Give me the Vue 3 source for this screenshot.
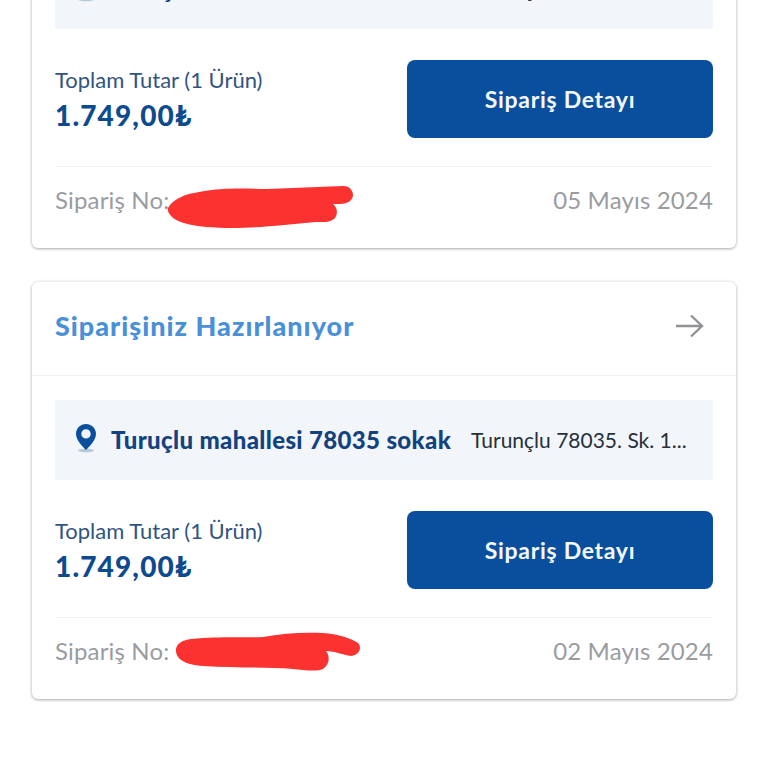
<template>
  <div class="page">
    <div class="order-list">
      <div v-for="order in orders" :key="order.date" class="order-card">
        <div class="card-head">
          <span class="status">Siparişiniz Hazırlanıyor</span>
          <svg class="arrow" width="32" height="32" viewBox="0 0 32 32" fill="none">
            <path d="M3 16H29M18 5.500 29 16 18 26.500" stroke="#8f9194" stroke-width="2.4" />
          </svg>
        </div>
        <div class="card-body">
          <div class="address">
            <svg class="pin" width="22" height="30" viewBox="0 0 22 30">
              <ellipse cx="11" cy="27.5" rx="8" ry="1.8" fill="#b9c8da" />
              <path fill="#0a4f9e" fill-rule="evenodd" d="M11 1C5.500 1 1 5.400 1 10.800 1 17.500 8 24 11 27 14 24 21 17.500 21 10.800 21 5.400 16.500 1 11 1ZM11 6.200A4.700 4.700 0 1 1 11 15.600 4.700 4.700 0 0 1 11 6.200Z" />
            </svg>
            <span class="address-name">{{ order.addressName }}</span>
            <span class="address-line">{{ order.addressLine }}</span>
          </div>
          <div class="summary">
            <div class="total">
              <span class="total-label">Toplam Tutar (1 Ürün)</span>
              <span class="total-price">1.749,00₺</span>
            </div>
            <button class="detail-btn">Sipariş Detayı</button>
          </div>
          <div class="card-foot">
            <span class="order-no">Sipariş No:</span>
            <span class="date">{{ order.date }}</span>
            <!-- red scribble over the order number -->
            <svg class="scribble" :class="order.scribble.cls" :width="order.scribble.w" :height="order.scribble.h" :viewBox="`0 0 ${order.scribble.w} ${order.scribble.h}`">
              <path fill="#fb3230" :d="order.scribble.d" />
            </svg>
          </div>
        </div>
      </div>
    </div>
  </div>
</template>

<script setup>
const orders = [
  {
    addressName: 'Turuçlu mahallesi 78035 sokak',
    addressLine: 'Turunçlu 78035. Sk. 1...',
    date: '05 Mayıs 2024',
    scribble: {
      cls: 'first',
      w: 186,
      h: 44,
      d: 'M1 24C6 15 18 10 32 8 60 3 80 5 100 5L176 2C183 2 186 7 186 11 186 16 181 20 173 20L166 20C171 24 171 31 167 35 162 39 156 38 148 38 120 41 88 44 66 44 44 44 14 42 5 33 2 30 0 27 1 24Z'
    }
  },
  {
    addressName: 'Turuçlu mahallesi 78035 sokak',
    addressLine: 'Turunçlu 78035. Sk. 1...',
    date: '02 Mayıs 2024',
    scribble: {
      cls: 'second',
      w: 186,
      h: 40,
      d: 'M1 17C2 11 8 8 16 7 50 4 70 6 88 5 108 1 130 0 148 1 162 2 176 6 183 11 187 15 185 23 176 24 168 23 160 19 151 19 155 24 155 32 148 37 142 40 128 38 118 37 90 35 60 36 28 34 12 33 0 28 1 17Z'
    }
  }
]
</script>

<style scoped>
.page {
  width: 768px;
  height: 768px;
  overflow: hidden;
  background: #fff;
  font-family: "Lato", "Liberation Sans", sans-serif;
}

.order-list {
  display: flex;
  flex-direction: column;
  gap: 34px;
  margin: -169px 32px 0;
}

.order-card {
  height: 417px;
  flex-shrink: 0;
  background: #fff;
  border-radius: 6px;
  box-shadow: 0 1px 3px rgba(0, 0, 0, 0.3), 0 0 4px rgba(0, 0, 0, 0.08);
}

.card-head {
  box-sizing: border-box;
  height: 94px;
  padding: 0 31px 6px 23px;
  display: flex;
  align-items: center;
  justify-content: space-between;
  border-bottom: 1px solid #f1f2f4;
}

.status {
  font-size: 27px;
  font-weight: 900;
  letter-spacing: 1px;
  color: #4a90d9;
}

.card-body {
  padding: 24px 23px 0;
}

.address {
  box-sizing: border-box;
  height: 80px;
  padding: 0 20px 2px;
  display: flex;
  align-items: center;
  background: #f2f5f9;
  white-space: nowrap;
}

.pin {
  flex-shrink: 0;
  margin-bottom: 2px;
}

.address-name {
  margin-left: 14px;
  font-size: 24px;
  font-weight: 900;
  letter-spacing: 0.35px;
  color: #12427f;
}

.address-line {
  margin-left: 20px;
  font-size: 21px;
  color: #27303a;
}

.summary {
  display: flex;
  justify-content: space-between;
  align-items: center;
  margin-top: 31px;
  height: 78px;
}

.total {
  display: flex;
  flex-direction: column;
  gap: 5px;
}

.total-label {
  font-size: 22px;
  color: #31557f;
}

.total-price {
  font-size: 28px;
  font-weight: 900;
  letter-spacing: 1.15px;
  color: #0e4a8e;
}

.detail-btn {
  width: 306px;
  height: 78px;
  border: none;
  border-radius: 8px;
  background: #0a4f9e;
  color: #f4f8fc;
  font-family: inherit;
  font-size: 23px;
  font-weight: 700;
  letter-spacing: 0.7px;
}

.card-foot {
  position: relative;
  box-sizing: border-box;
  display: flex;
  justify-content: space-between;
  align-items: center;
  margin-top: 28px;
  height: 70px;
  padding-bottom: 4px;
  border-top: 1px solid #f1f2f4;
}

.order-no,
.date {
  font-size: 24px;
  letter-spacing: 0.15px;
  color: #9a9c9f;
}

.scribble {
  position: absolute;
}

.scribble.first {
  left: 112px;
  top: 17px;
}

.scribble.second {
  left: 120px;
  top: 14px;
}
</style>
